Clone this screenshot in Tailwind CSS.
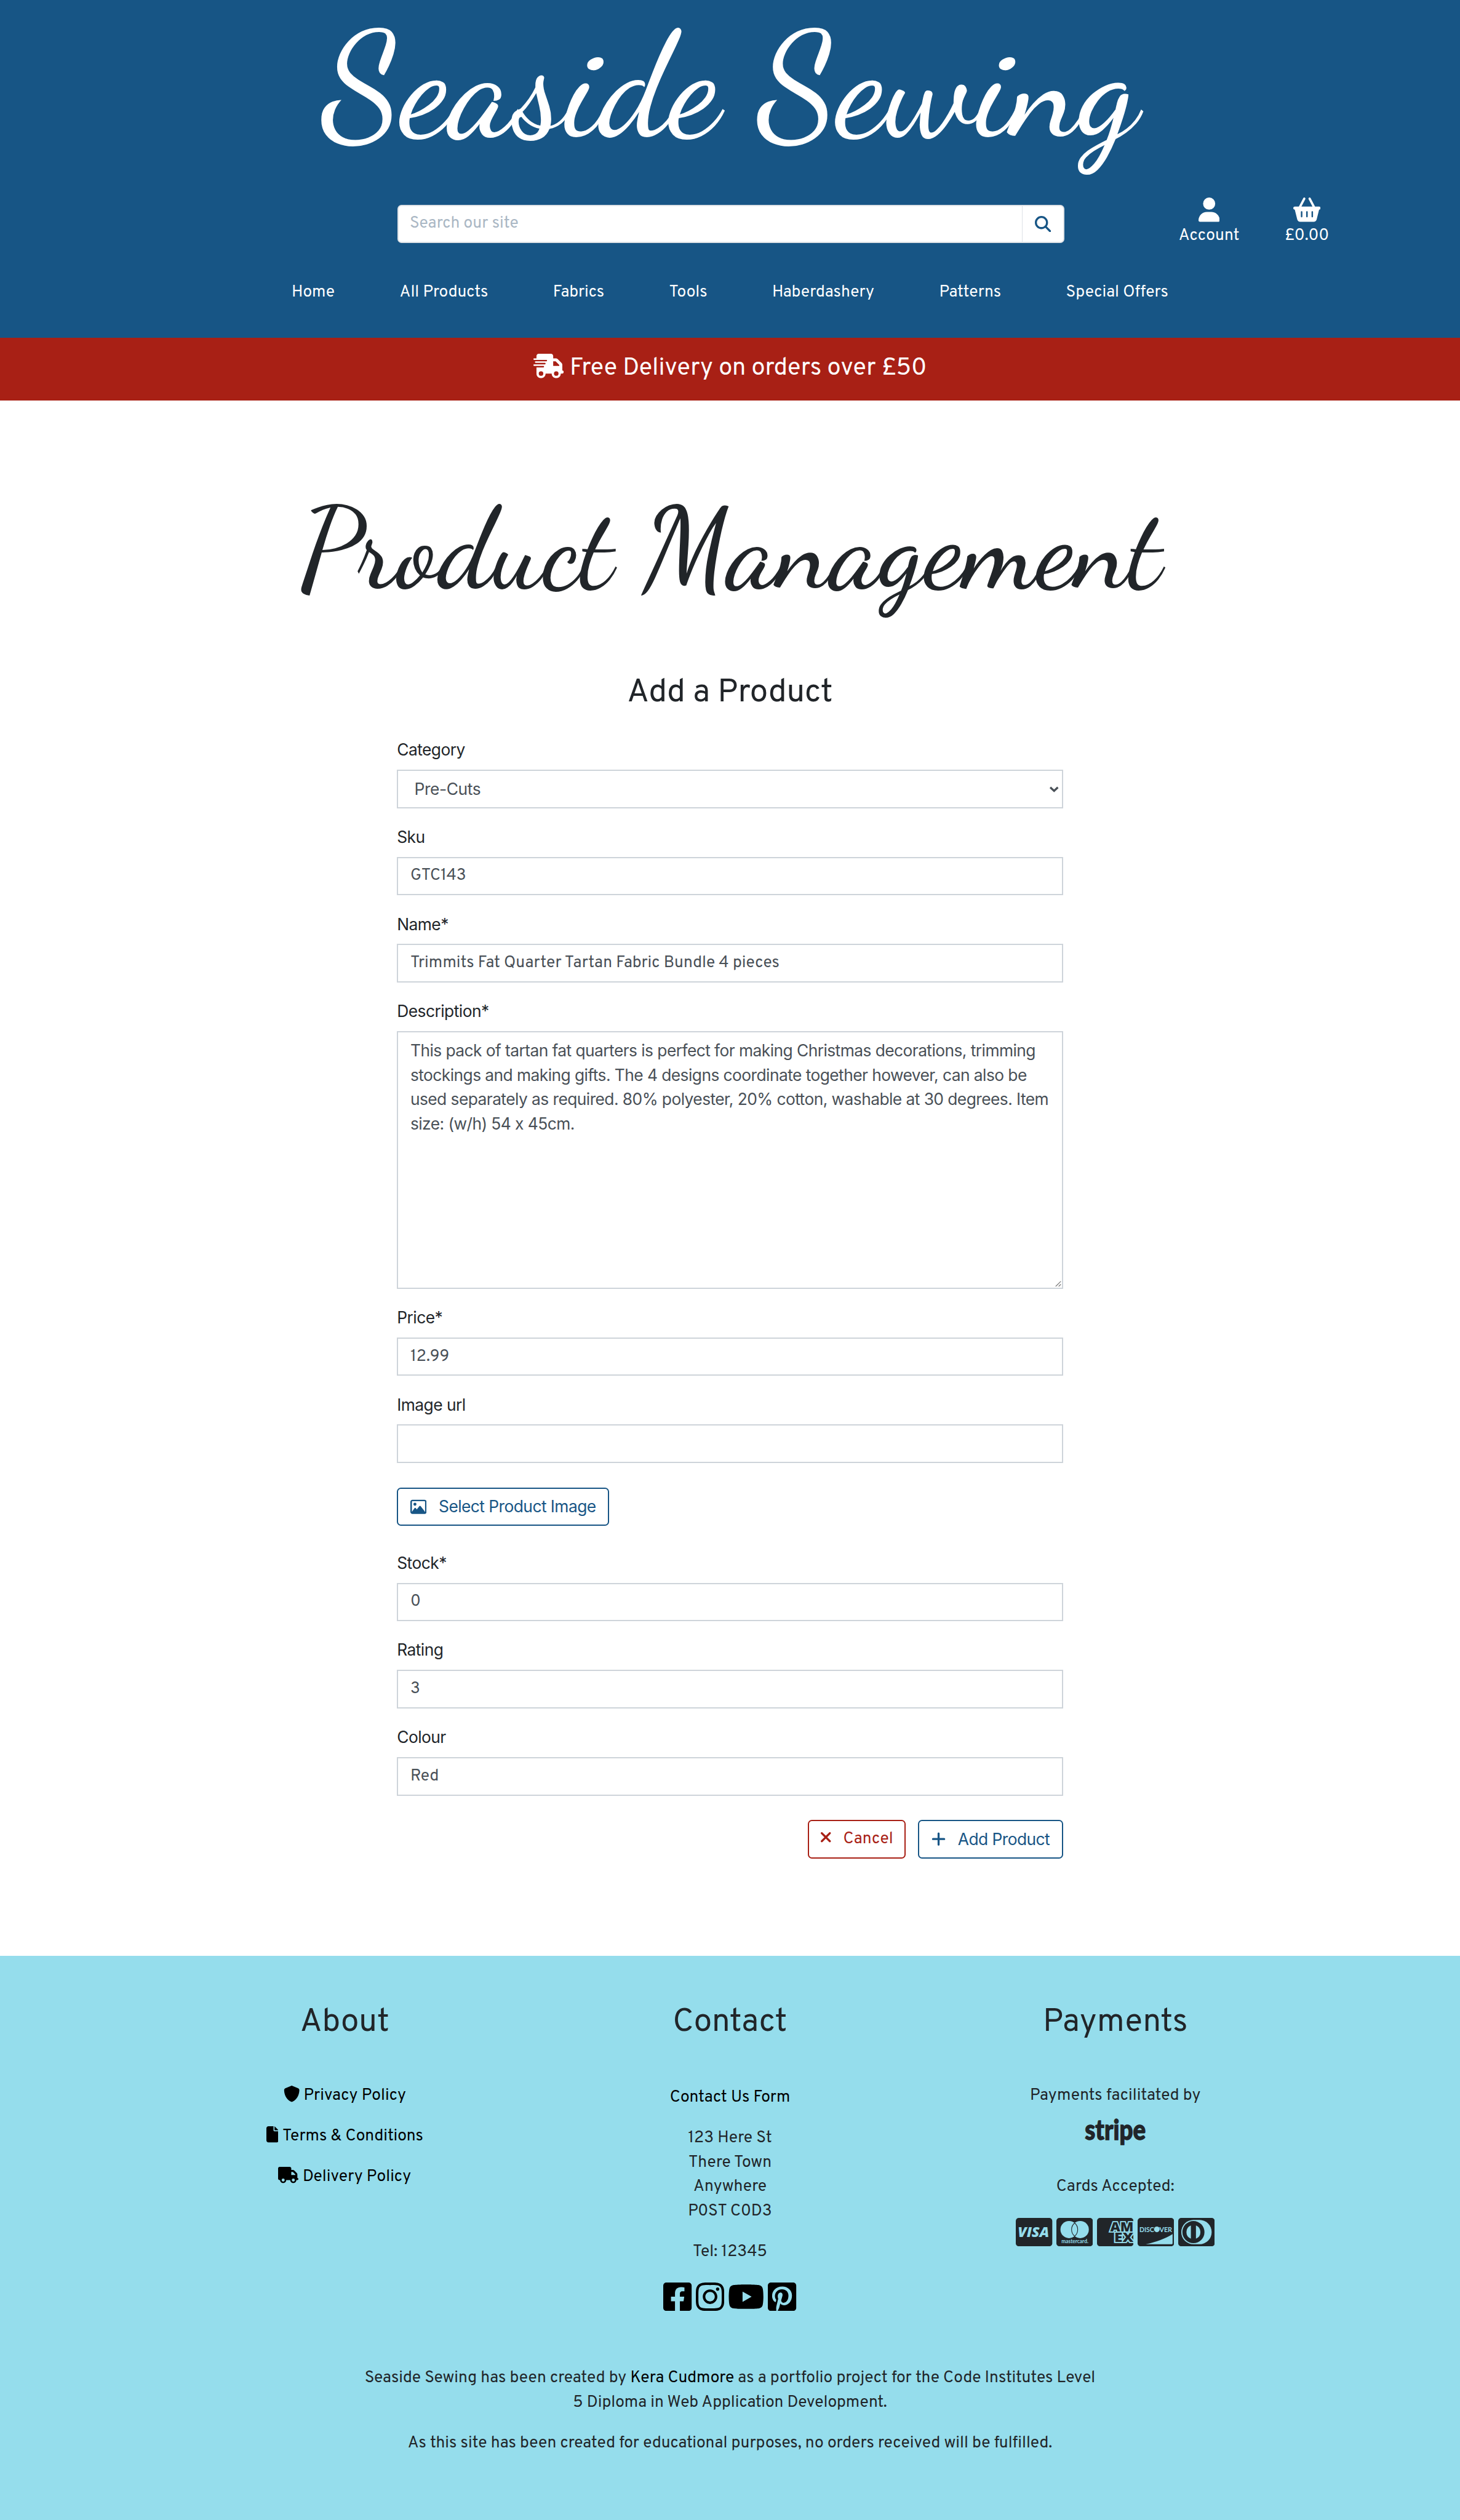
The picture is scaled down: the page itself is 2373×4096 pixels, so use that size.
<!DOCTYPE html>
<html lang="en" class="text-[26.3667px]">
<head>
<meta charset="utf-8">
<title>Seaside Sewing - Product Management</title>
<script src="https://cdn.jsdelivr.net/npm/@tailwindcss/browser@4"></script>
</head>
<body class="bg-white font-['Overpass','Roboto',sans-serif] text-base leading-6 text-[#212529]">

<!-- Header -->
<header class="h-83.25 overflow-hidden bg-[#175585] text-white">
  <h1 class="flex h-48.75 justify-center text-center font-['Dancing_Script',cursive] text-[9rem] leading-[1.19] font-medium whitespace-nowrap">Seaside Sewing</h1>
  <div class="flex items-start pl-98">
    <form class="mt-1.75 flex h-9.5 w-164.5 rounded-[.25rem] border-2 border-[#dee2e6] bg-white">
      <input type="text" placeholder="Search our site" class="min-w-0 flex-1 pl-2.75 placeholder:text-[#aab7c4]">
      <button type="button" class="flex w-10.25 items-center justify-center border-l border-[#dee2e6] text-[#175585]">
        <svg class="size-4" viewBox="0 0 512 512" fill="currentColor"><path d="M416 208c0 45.9-14.9 88.3-40 122.7L502.6 457.4c12.5 12.5 12.5 32.8 0 45.3s-32.8 12.5-45.3 0L330.7 376c-34.4 25.2-76.8 40-122.7 40C93.1 416 0 322.9 0 208S93.1 0 208 0S416 93.1 416 208zM208 352a144 144 0 1 0 0-288 144 144 0 1 0 0 288z"/></svg>
      </button>
    </form>
    <a class="ml-28.25 flex w-14.75 flex-col items-center gap-0.5">
      <svg class="h-6 w-5.25" viewBox="0 0 448 512" fill="currentColor"><path d="M224 256A128 128 0 1 0 224 0a128 128 0 1 0 0 256zm-45.7 48C79.8 304 0 383.8 0 482.3C0 498.7 13.3 512 29.7 512H418.3c16.4 0 29.7-13.3 29.7-29.7C448 383.8 368.2 304 269.7 304H178.3z"/></svg>
      <span>Account</span>
    </a>
    <a class="ml-11.5 flex w-10.5 flex-col items-center gap-0.5">
      <svg class="h-6 w-6.75" viewBox="0 0 576 512" fill="currentColor"><path d="M253.3 35.1c6.1-11.8 1.5-26.3-10.2-32.4s-26.3-1.5-32.4 10.2L117.6 192H32c-17.7 0-32 14.3-32 32s14.3 32 32 32L83.9 463.5C91 492 116.6 512 146 512H430c29.4 0 55-20 62.1-48.5L544 256c17.7 0 32-14.3 32-32s-14.3-32-32-32H458.4L365.3 12.9C359.2 1.2 344.7-3.4 332.9 2.7s-16.3 20.6-10.2 32.4L404.3 192H171.7L253.3 35.1zM192 304v96c0 8.8-7.2 16-16 16s-16-7.2-16-16V304c0-8.8 7.2-16 16-16s16 7.2 16 16zm96-16c8.8 0 16 7.2 16 16v96c0 8.8-7.2 16-16 16s-16-7.2-16-16V304c0-8.8 7.2-16 16-16zm128 16v96c0 8.8-7.2 16-16 16s-16-7.2-16-16V304c0-8.8 7.2-16 16-16s16 7.2 16 16z"/></svg>
      <span>£0.00</span>
    </a>
  </div>
  <nav class="mt-8 flex justify-center gap-16">
    <a>Home</a><a>All Products</a><a>Fabrics</a><a>Tools</a><a>Haberdashery</a><a>Patterns</a><a>Special Offers</a>
  </nav>
</header>

<!-- Delivery banner -->
<div class="flex h-15.5 items-start justify-center gap-1.5 bg-[#a82015] pt-3.25 text-[1.5rem] leading-9 text-white">
  <svg class="mt-0.75 h-6 w-7.5" viewBox="0 0 640 512" fill="currentColor"><path d="M112 0C85.5 0 64 21.5 64 48V96H16c-8.8 0-16 7.2-16 16s7.2 16 16 16H64 272c8.8 0 16 7.2 16 16s-7.2 16-16 16H64 48c-8.8 0-16 7.2-16 16s7.2 16 16 16H64 240c8.8 0 16 7.2 16 16s-7.2 16-16 16H64 16c-8.8 0-16 7.2-16 16s7.2 16 16 16H64 208c8.8 0 16 7.2 16 16s-7.2 16-16 16H64V416c0 53 43 96 96 96s96-43 96-96H384c0 53 43 96 96 96s96-43 96-96h32c17.7 0 32-14.3 32-32s-14.3-32-32-32V288 256 237.3c0-17-6.7-33.3-18.7-45.3L512 114.7c-12-12-28.3-18.7-45.3-18.7H416V48c0-26.5-21.5-48-48-48H112zM544 237.3V256H416V160h50.7L544 237.3zM160 368a48 48 0 1 1 0 96 48 48 0 1 1 0-96zm272 48a48 48 0 1 1 96 0 48 48 0 1 1 -96 0z"/></svg>
  <span>Free Delivery on orders over £50</span>
</div>

<main class="flex h-383.5 flex-col items-center pt-20">
  <h1 class="font-['Dancing_Script',cursive] text-[7rem] leading-[1.2] font-medium whitespace-nowrap">Product Management</h1>
  <h2 class="mt-[3.46rem] text-[2rem] leading-[1.2]">Add a Product</h2>

  <form class="mt-6 flex w-164.25 flex-col font-['Inter',sans-serif]">
    <div>
      <label class="mb-1.75 block leading-6.25 tracking-[-.02em]">Category</label>
      <div class="relative">
        <select class="block h-9.5 w-full appearance-none border-2 border-[#ced4da] bg-white pl-4 tracking-[-.015em] text-[#495057]"><option>Pre-Cuts</option></select>
        <svg class="absolute top-3.75 right-1 h-2 w-2.5 text-[#495057]" viewBox="0 0 20 16" fill="none" stroke="currentColor" stroke-width="4"><path d="M2.5 4.5l7.5 7 7.5-7"/></svg>
      </div>
    </div>
    <div class="mt-4">
      <label class="mb-1.75 block leading-6.25 tracking-[-.02em]">Sku</label>
      <input value="GTC143" class="block h-9.5 w-full border-2 border-[#ced4da] bg-white px-3 font-['Overpass','Roboto',sans-serif] text-[#495057]">
    </div>
    <div class="mt-4">
      <label class="mb-1.75 block leading-6.25 tracking-[-.02em]">Name*</label>
      <input value="Trimmits Fat Quarter Tartan Fabric Bundle 4 pieces" class="block h-9.5 w-full border-2 border-[#ced4da] bg-white px-3 font-['Overpass','Roboto',sans-serif] text-[#495057]">
    </div>
    <div class="mt-4">
      <label class="mb-1.75 block leading-6.25 tracking-[-.02em]">Description*</label>
      <div class="relative">
        <textarea class="block h-63.5 w-full resize-none border-2 border-[#ced4da] bg-white px-3 py-1.5 tracking-[-.0213em] text-[#495057]">This pack of tartan fat quarters is perfect for making Christmas decorations, trimming stockings and making gifts. The 4 designs coordinate together however, can also be used separately as required. 80% polyester, 20% cotton, washable at 30 degrees. Item size: (w/h) 54 x 45cm.</textarea>
        <svg class="absolute right-0.5 bottom-0.5 size-1.5 text-[#777]" viewBox="0 0 8 8" fill="none" stroke="currentColor" stroke-width="1"><path d="M.5 7.5l7-7M4.5 7.5l3-3"/></svg>
      </div>
    </div>
    <div class="mt-4">
      <label class="mb-1.75 block leading-6.25 tracking-[-.02em]">Price*</label>
      <input value="12.99" class="block h-9.5 w-full border-2 border-[#ced4da] bg-white px-3 font-['Overpass','Roboto',sans-serif] text-[#495057]">
    </div>
    <div class="mt-4">
      <label class="mb-1.75 block leading-6.25 tracking-[-.02em]">Image url</label>
      <input value="" class="block h-9.5 w-full border-2 border-[#ced4da] bg-white px-3 font-['Overpass','Roboto',sans-serif] text-[#495057]">
    </div>
    <button type="button" class="mt-6 flex h-9.5 w-52.25 items-center gap-3 rounded-[.25rem] border-2 border-[#175585] pl-3 tracking-[-.021em] whitespace-nowrap text-[#175585]">
      <svg class="size-4" viewBox="0 0 512 512" fill="currentColor"><path d="M448 80c8.8 0 16 7.2 16 16V415.8l-5-6.5-136-176c-4.5-5.9-11.6-9.3-19-9.3s-14.4 3.4-19 9.3L202 340.7l-30.5-42.7C167 291.7 159.8 288 152 288s-15 3.7-19.5 10.1l-80 112L48 416.3l0-.3V96c0-8.8 7.2-16 16-16H448zM64 32C28.7 32 0 60.7 0 96V416c0 35.3 28.7 64 64 64H448c35.3 0 64-28.7 64-64V96c0-35.3-28.7-64-64-64H64zm80 192a48 48 0 1 0 0-96 48 48 0 1 0 0 96z"/></svg>
      <span>Select Product Image</span>
    </button>
    <div class="mt-6">
      <label class="mb-1.75 block leading-6.25 tracking-[-.02em]">Stock*</label>
      <input value="0" class="block h-9.5 w-full border-2 border-[#ced4da] bg-white px-3 font-['Overpass','Roboto',sans-serif] text-[#495057]">
    </div>
    <div class="mt-4">
      <label class="mb-1.75 block leading-6.25 tracking-[-.02em]">Rating</label>
      <input value="3" class="block h-9.5 w-full border-2 border-[#ced4da] bg-white px-3 font-['Overpass','Roboto',sans-serif] text-[#495057]">
    </div>
    <div class="mt-4">
      <label class="mb-1.75 block leading-6.25 tracking-[-.02em]">Colour</label>
      <input value="Red" class="block h-9.5 w-full border-2 border-[#ced4da] bg-white px-3 font-['Overpass','Roboto',sans-serif] text-[#495057]">
    </div>
    <div class="mt-6 flex justify-end gap-3">
      <a class="flex h-9.5 w-24.25 items-center gap-3 rounded-[.25rem] border-2 border-[#a82015] pl-3 font-['Overpass','Roboto',sans-serif] text-[#a82015]">
        <svg class="mb-1 h-4 w-2.5" viewBox="0 0 320 512" fill="currentColor"><path d="M310.6 150.6c12.5-12.5 12.5-32.8 0-45.3s-32.8-12.5-45.3 0L160 210.7 54.6 105.4c-12.5-12.5-32.8-12.5-45.3 0s-12.5 32.8 0 45.3L114.7 256 9.4 361.4c-12.5 12.5-12.5 32.8 0 45.3s32.8 12.5 45.3 0L160 301.3 265.4 406.6c12.5 12.5 32.8 12.5 45.3 0s12.5-32.8 0-45.3L205.3 256 310.6 150.6z"/></svg>
        <span>Cancel</span>
      </a>
      <button type="button" class="flex h-9.5 w-35.75 items-center gap-3 rounded-[.25rem] border-2 border-[#175585] pl-3 tracking-[-.021em] whitespace-nowrap text-[#175585]">
        <svg class="h-4 w-3.5" viewBox="0 0 448 512" fill="currentColor"><path d="M256 80c0-17.7-14.3-32-32-32s-32 14.3-32 32V224H48c-17.7 0-32 14.3-32 32s14.3 32 32 32H192V432c0 17.7 14.3 32 32 32s32-14.3 32-32V288H400c17.7 0 32-14.3 32-32s-14.3-32-32-32H256V80z"/></svg>
        <span>Add Product</span>
      </button>
    </div>
  </form>
</main>

<!-- Footer -->
<footer class="h-139.5 bg-[#95ddec] pt-11.75 text-center">
  <div class="mx-auto grid h-89.5 w-285 grid-cols-3">
    <section>
      <h3 class="text-[2rem] leading-[1.2]">About</h3>
      <ul class="mt-10.25 space-y-4 text-black">
        <li class="flex items-center justify-center gap-1">
          <svg class="mb-1 size-4" viewBox="0 0 512 512" fill="currentColor"><path d="M256 0c4.6 0 9.2 1 13.4 2.9L457.7 82.8c22 9.3 38.4 31 38.3 57.2c-.5 99.2-41.3 280.7-213.6 363.2c-16.7 8-36.1 8-52.8 0C57.3 420.7 16.5 239.2 16 140c-.1-26.2 16.3-47.9 38.3-57.2L242.7 2.9C246.8 1 251.4 0 256 0z"/></svg>
          <a>Privacy Policy</a></li>
        <li class="flex items-center justify-center gap-1">
          <svg class="mb-1 h-4 w-3" viewBox="0 0 384 512" fill="currentColor"><path d="M0 64C0 28.7 28.7 0 64 0H224V128c0 17.7 14.3 32 32 32H384V448c0 35.3-28.7 64-64 64H64c-35.3 0-64-28.7-64-64V64zm384 64H256V0L384 128z"/></svg>
          <a>Terms &amp; Conditions</a></li>
        <li class="flex items-center justify-center gap-1">
          <svg class="mb-1 h-4 w-5" viewBox="0 0 640 512" fill="currentColor"><path d="M48 0C21.5 0 0 21.5 0 48V368c0 26.5 21.5 48 48 48H64c0 53 43 96 96 96s96-43 96-96H384c0 53 43 96 96 96s96-43 96-96h32c17.7 0 32-14.3 32-32s-14.3-32-32-32V288 256 237.3c0-17-6.7-33.3-18.7-45.3L512 114.7c-12-12-28.3-18.7-45.3-18.7H416V48c0-26.5-21.5-48-48-48H48zM416 160h50.7L544 237.3V256H416V160zM112 416a48 48 0 1 1 96 0 48 48 0 1 1 -96 0zm368-48a48 48 0 1 1 0 96 48 48 0 1 1 0-96z"/></svg>
          <a>Delivery Policy</a></li>
      </ul>
    </section>
    <section>
      <h3 class="text-[2rem] leading-[1.2]">Contact</h3>
      <p class="mt-10.75 text-black">Contact Us Form</p>
      <address class="mt-4 not-italic">123 Here St<br>There Town<br>Anywhere<br>P0ST C0D3</address>
      <p class="mt-4">Tel: 12345</p>
      <div class="mt-4.5 flex justify-center gap-[.234rem] text-black">
        <svg class="size-7" viewBox="0 32 448 448" fill="currentColor"><path d="M400 32H48A48 48 0 0 0 0 80v352a48 48 0 0 0 48 48h137.25V327.69h-63V256h63v-54.64c0-62.15 37-96.48 93.67-96.48 27.14 0 55.52 4.84 55.52 4.84v61h-31.27c-30.81 0-40.42 19.12-40.42 38.73V256h68.78l-11 71.69h-57.78V480H400a48 48 0 0 0 48-48V80a48 48 0 0 0-48-48z"/></svg>
        <svg class="size-7" viewBox="0 32 448 448" fill="currentColor"><path d="M224.1 141c-63.6 0-114.9 51.3-114.9 114.9s51.3 114.9 114.9 114.9S339 319.5 339 255.9 287.7 141 224.1 141zm0 189.6c-41.1 0-74.7-33.5-74.7-74.7s33.5-74.7 74.7-74.7 74.7 33.5 74.7 74.7-33.6 74.7-74.7 74.7zm146.4-194.3c0 14.9-12 26.8-26.8 26.8-14.9 0-26.8-12-26.8-26.8s12-26.8 26.8-26.8 26.8 12 26.8 26.8zm76.1 27.2c-1.7-35.9-9.9-67.7-36.2-93.9-26.2-26.2-58-34.4-93.9-36.2-37-2.1-147.9-2.1-184.9 0-35.8 1.7-67.6 9.9-93.9 36.1s-34.4 58-36.2 93.9c-2.1 37-2.1 147.9 0 184.9 1.7 35.9 9.9 67.7 36.2 93.9s58 34.4 93.9 36.2c37 2.1 147.9 2.1 184.9 0 35.9-1.7 67.7-9.9 93.9-36.2 26.2-26.2 34.4-58 36.2-93.9 2.1-37 2.1-147.8 0-184.8zM398.8 388c-7.8 19.6-22.9 34.7-42.6 42.6-29.5 11.7-99.5 9-132.1 9s-102.7 2.6-132.1-9c-19.6-7.8-34.7-22.9-42.6-42.6-11.7-29.5-9-99.5-9-132.1s-2.6-102.7 9-132.1c7.8-19.6 22.9-34.7 42.6-42.6 29.5-11.7 99.5-9 132.1-9s102.7-2.6 132.1 9c19.6 7.8 34.7 22.9 42.6 42.6 11.7 29.5 9 99.5 9 132.1s2.7 102.7-9 132.1z"/></svg>
        <svg class="h-7 w-9" viewBox="0 32 576 448" fill="currentColor"><path d="M549.655 124.083c-6.281-23.65-24.787-42.276-48.284-48.597C458.781 64 288 64 288 64S117.22 64 74.629 75.486c-23.497 6.322-42.003 24.947-48.284 48.597-11.412 42.867-11.412 132.305-11.412 132.305s0 89.438 11.412 132.305c6.281 23.65 24.787 41.5 48.284 47.821C117.22 448 288 448 288 448s170.78 0 213.371-11.486c23.497-6.321 42.003-24.171 48.284-47.821 11.412-42.867 11.412-132.305 11.412-132.305s0-89.438-11.412-132.305zm-317.51 213.508V175.185l142.739 81.205-142.739 81.201z"/></svg>
        <svg class="size-7" viewBox="0 32 448 448" fill="currentColor"><path d="M448 80v352c0 26.5-21.5 48-48 48H154.4c9.8-16.4 22.4-40 27.4-59.3 3-11.5 15.3-58.4 15.3-58.4 8 15.3 31.4 28.2 56.3 28.2 74.1 0 127.4-68.1 127.4-152.7 0-81.1-66.2-141.8-151.4-141.8-106 0-162.2 71.1-162.2 148.6 0 36 19.2 80.8 49.8 95.1 4.7 2.2 7.1 1.2 8.2-3.3.8-3.4 5-20.1 6.8-27.8.6-2.5.3-4.6-1.7-7-10.1-12.3-18.3-34.9-18.3-56 0-54.2 41-106.6 110.9-106.6 60.3 0 102.6 41.1 102.6 99.9 0 66.4-33.5 112.4-77.2 112.4-24.1 0-42.1-19.9-36.4-44.4 6.9-29.2 20.3-60.7 20.3-81.8 0-53-75.5-45.7-75.5 25 0 21.7 7.3 36.5 7.3 36.5-31.4 132.8-36.1 134.5-29.6 192.6l2.2.8H48c-26.5 0-48-21.5-48-48V80c0-26.5 21.5-48 48-48h352c26.5 0 48 21.5 48 48z"/></svg>
      </div>
    </section>
    <section>
      <h3 class="text-[2rem] leading-[1.2]">Payments</h3>
      <p class="mt-10.25">Payments facilitated by</p>
      <svg class="mx-auto mt-2 h-8 w-16 overflow-visible" viewBox="0 0 128 64" fill="currentColor" stroke="currentColor" stroke-width="1.6"><text x="4" y="46" font-size="56" textLength="120" lengthAdjust="spacingAndGlyphs" class="font-['Lato'] font-black">stripe</text></svg>
      <p class="mt-6.5">Cards Accepted:</p>
      <div class="mt-4.5 flex justify-center gap-1">
        <svg class="h-7 w-9" viewBox="0 0 72 56"><rect width="72" height="56" rx="6" fill="#212529"/><text x="4" y="37.5" font-size="27" textLength="62" lengthAdjust="spacingAndGlyphs" fill="#95ddec" class="font-['Open_Sans'] font-extrabold italic">VISA</text></svg>
        <svg class="h-7 w-9" viewBox="0 0 72 56"><rect width="72" height="56" rx="6" fill="#212529"/><circle cx="25" cy="23" r="17" fill="#95ddec"/><circle cx="47" cy="23" r="17" fill="#95ddec"/><path d="M36 10a17 17 0 0 1 0 26a17 17 0 0 1 0-26z" fill="none" stroke="#212529" stroke-width="1.3"/><text x="10" y="49.5" font-size="10.5" textLength="53" lengthAdjust="spacingAndGlyphs" fill="#95ddec" class="font-['Lato'] font-bold">mastercard.</text></svg>
        <svg class="h-7 w-9" viewBox="0 0 72 56"><rect width="72" height="56" rx="6" fill="#212529"/><g fill="#212529" stroke="#95ddec" stroke-width="4.5" paint-order="stroke" font-size="25" class="font-['Open_Sans'] font-extrabold"><text x="26" y="26.5" textLength="46" lengthAdjust="spacingAndGlyphs">AM</text><text x="34" y="47.5" textLength="38" lengthAdjust="spacingAndGlyphs">EX</text></g></svg>
        <svg class="h-7 w-9" viewBox="0 0 72 56"><rect width="72" height="56" rx="6" fill="#212529"/><g fill="#95ddec" font-size="14.5" class="font-['Lato'] font-bold"><text x="3.5" y="27.8" textLength="29" lengthAdjust="spacingAndGlyphs">DISC</text><text x="43" y="27.8" textLength="25" lengthAdjust="spacingAndGlyphs">VER</text><circle cx="38" cy="22.5" r="5.6"/><path d="M16 52C36 48 55 41 69 32V50q0 2-2 2z"/></g></svg>
        <svg class="h-7 w-9" viewBox="0 0 72 56"><rect width="72" height="56" rx="6" fill="#212529"/><path d="M30 4H42A24 24 0 0 1 42 52H30A24 24 0 0 1 30 4z" fill="#95ddec"/><circle cx="30" cy="28" r="21.8" fill="#212529"/><path d="M25 15A14 14 0 0 0 25 41zM35 15A14 14 0 0 1 35 41z" fill="#95ddec"/></svg>
      </div>
    </section>
  </div>
  <div class="mx-auto w-182 space-y-4">
    <p>Seaside Sewing has been created by <a class="text-black">Kera Cudmore</a> as a portfolio project for the Code Institutes Level 5 Diploma in Web Application Development.</p>
    <p>As this site has been created for educational purposes, no orders received will be fulfilled.</p>
  </div>
</footer>
</body>
</html>
